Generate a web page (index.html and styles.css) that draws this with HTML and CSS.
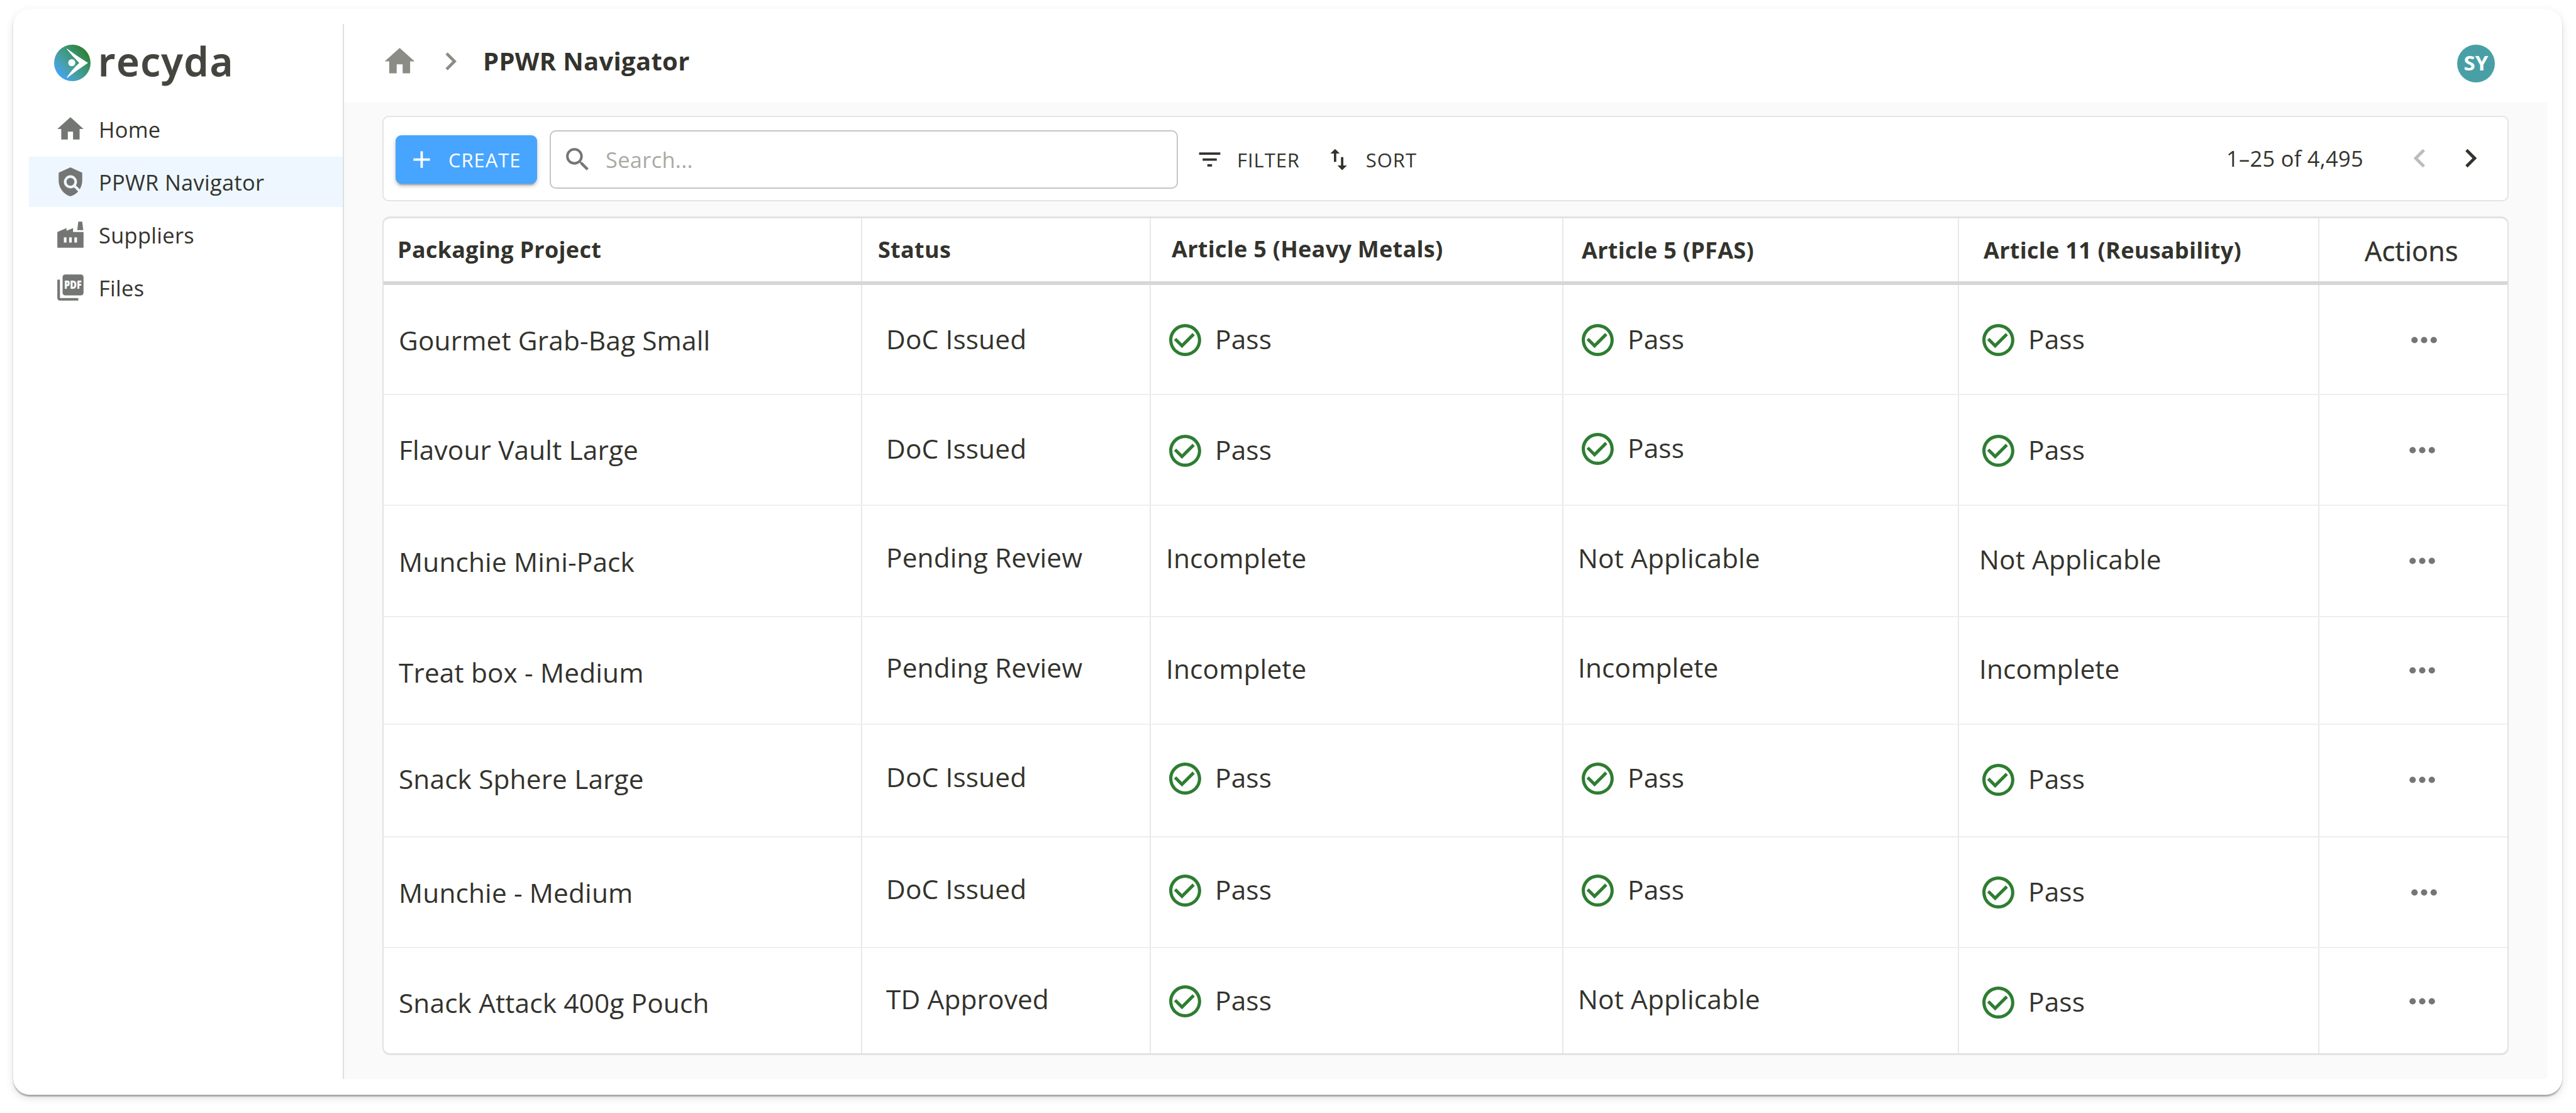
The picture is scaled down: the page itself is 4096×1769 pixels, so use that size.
FILE: index.html
```html
<!DOCTYPE html>
<html lang="en">
<head>
    <meta charset="utf-8">
    <title>PPWR Navigator - recyda</title>
    <link rel="stylesheet" href="styles.css">
</head>
<body>

    <!-- shared icons -->
    <svg class="sprite">
        <symbol id="home" viewBox="0 0 24 24"><path d="M10 20v-6h4v6h5v-8h3L12 3 2 12h3v8z"/></symbol>
        <symbol id="chevron-right" viewBox="0 0 24 24"><path d="M10 6 8.59 7.41 13.17 12l-4.58 4.59L10 18l6-6z"/></symbol>
        <symbol id="chevron-left" viewBox="0 0 24 24"><path d="M15.41 7.41 14 6l-6 6 6 6 1.41-1.41L10.83 12z"/></symbol>
        <symbol id="check" viewBox="0 0 24 24"><path d="M16.59 7.58 10 14.17l-3.59-3.58L5 12l5 5 8-8zM12 2C6.48 2 2 6.48 2 12s4.48 10 10 10 10-4.48 10-10S17.52 2 12 2zm0 18c-4.42 0-8-3.58-8-8s3.58-8 8-8 8 3.58 8 8-3.58 8-8 8z"/></symbol>
        <symbol id="more" viewBox="0 0 24 24"><circle cx="6" cy="12" r="2"/><circle cx="12" cy="12" r="2"/><circle cx="18" cy="12" r="2"/></symbol>
    </svg>

    <div class="window">

        <aside class="sidebar">
            <div class="logo">
                <svg class="logo-mark" viewBox="0 0 100 100">
                    <defs>
                        <linearGradient id="mark" x1="0.1" y1="0.85" x2="0.88" y2="0.15">
                            <stop offset="0" stop-color="#43a4fb"/>
                            <stop offset="0.35" stop-color="#48a0a8"/>
                            <stop offset="0.7" stop-color="#37936c"/>
                            <stop offset="1" stop-color="#2e7d32"/>
                        </linearGradient>
                    </defs>
                    <circle cx="50" cy="50" r="50" fill="url(#mark)"/>
                    <path d="M36 11Q64 32 93 50Q64 69 36 91Q34 91.500 35 89.500Q50 67 69 50Q50 32 35 12.500Q34.500 10.500 36 11z" fill="#fff"/>
                    <circle cx="48.500" cy="49.500" r="9.700" fill="#fff"/>
                </svg>
                <span class="logo-text">recyda</span>
            </div>

            <nav class="nav">
                <a class="nav-item">
                    <svg class="nav-icon"><use href="#home"/></svg>
                    <span>Home</span>
                </a>
                <a class="nav-item active">
                    <svg class="nav-icon" viewBox="0 0 24 24"><path d="M21 5l-9-4-9 4v6c0 5.550 3.840 10.740 9 12 2.300-.560 4.330-1.900 5.880-3.710l-3.120-3.120c-1.940 1.290-4.580 1.070-6.290-.640-1.950-1.950-1.950-5.120 0-7.070 1.950-1.950 5.120-1.950 7.070 0 1.710 1.710 1.920 4.350.640 6.290l2.900 2.900C20.290 15.690 21 13.380 21 11V5z"/><circle cx="12" cy="12" r="3"/></svg>
                    <span>PPWR Navigator</span>
                </a>
                <a class="nav-item">
                    <svg class="nav-icon" viewBox="0 0 24 24"><path d="M22 22H2V10l7-3v2l5-2v3h8v12zM17.200 8.500 18 2h3l.800 6.500h-4.600zM11 18h2v-4h-2v4zm-4 0h2v-4H7v4zm10-4h-2v4h2v-4z"/></svg>
                    <span>Suppliers</span>
                </a>
                <a class="nav-item">
                    <svg class="nav-icon" viewBox="0 0 24 24">
                        <path d="M4 6H2v14c0 1.100.900 2 2 2h14v-2H4z"/>
                        <rect x="6" y="2" width="16" height="16" rx="2"/>
                        <text class="pdf" x="7.200" y="13" textLength="13.400" lengthAdjust="spacingAndGlyphs">PDF</text>
                    </svg>
                    <span>Files</span>
                </a>
            </nav>
        </aside>

        <main class="main">
            <header class="topbar">
                <svg class="crumb-icon"><use href="#home"/></svg>
                <svg class="crumb-icon"><use href="#chevron-right"/></svg>
                <h1>PPWR Navigator</h1>
                <div class="avatar">SY</div>
            </header>

            <div class="content">
                <div class="toolbar">
                    <button class="create">
                        <svg class="btn-icon" viewBox="0 0 24 24"><path d="M19 13h-6v6h-2v-6H5v-2h6V5h2v6h6z"/></svg>
                        <span>CREATE</span>
                    </button>
                    <div class="search">
                        <svg class="search-icon" viewBox="0 0 24 24"><path d="M15.500 14h-.790l-.280-.270C15.410 12.590 16 11.110 16 9.500 16 5.910 13.090 3 9.500 3S3 5.910 3 9.500 5.910 16 9.500 16c1.610 0 3.090-.590 4.230-1.570l.270.280v.790l5 4.990L20.490 19l-4.990-5zm-6 0C7.010 14 5 11.990 5 9.500S7.010 5 9.500 5 14 7.010 14 9.500 11.990 14 9.500 14z"/></svg>
                        <span>Search...</span>
                    </div>
                    <button class="tool filter">
                        <svg class="btn-icon" viewBox="0 0 24 24"><path d="M10 18h4v-2h-4v2zM3 6v2h18V6H3zm3 7h12v-2H6v2z"/></svg>
                        <span>FILTER</span>
                    </button>
                    <button class="tool sort">
                        <svg class="btn-icon" viewBox="0 0 24 24"><path d="M16 17.010V10h-2v7.010h-3L15 21l4-3.990h-3zM9 3 5 6.990h3V14h2V6.990h3L9 3z"/></svg>
                        <span>SORT</span>
                    </button>
                    <div class="pager">
                        <span>1–25 of 4,495</span>
                        <svg class="page-icon disabled"><use href="#chevron-left"/></svg>
                        <svg class="page-icon"><use href="#chevron-right"/></svg>
                    </div>
                </div>

                <div class="table">
                    <div class="row head">
                        <div class="cell name up-1">Packaging Project</div>
                        <div class="cell status up-1">Status</div>
                        <div class="cell metals up-2">Article 5 (Heavy Metals)</div>
                        <div class="cell pfas">Article 5 (PFAS)</div>
                        <div class="cell reuse">Article 11 (Reusability)</div>
                        <div class="cell actions down-1">Actions</div>
                    </div>
                    <div class="row">
                        <div class="cell name down-1">Gourmet Grab-Bag Small</div>
                        <div class="cell status up-1">DoC Issued</div>
                        <div class="cell metals pass down-1"><svg><use href="#check"/></svg><span>Pass</span></div>
                        <div class="cell pfas pass down-1"><svg><use href="#check"/></svg><span>Pass</span></div>
                        <div class="cell reuse pass down-1"><svg><use href="#check"/></svg><span>Pass</span></div>
                        <div class="cell actions shifted down-1"><svg><use href="#more"/></svg></div>
                    </div>
                    <div class="row">
                        <div class="cell name up-1">Flavour Vault Large</div>
                        <div class="cell status up-3">DoC Issued</div>
                        <div class="cell metals pass down-1"><svg><use href="#check"/></svg><span>Pass</span></div>
                        <div class="cell pfas pass up-2"><svg><use href="#check"/></svg><span>Pass</span></div>
                        <div class="cell reuse pass down-1"><svg><use href="#check"/></svg><span>Pass</span></div>
                        <div class="cell actions"><svg><use href="#more"/></svg></div>
                    </div>
                    <div class="row">
                        <div class="cell name down-1">Munchie Mini-Pack</div>
                        <div class="cell status up-6">Pending Review</div>
                        <div class="cell metals up-5">Incomplete</div>
                        <div class="cell pfas up-5">Not Applicable</div>
                        <div class="cell reuse up-3">Not Applicable</div>
                        <div class="cell actions"><svg><use href="#more"/></svg></div>
                    </div>
                    <div class="row">
                        <div class="cell name down-3">Treat box - Medium</div>
                        <div class="cell status up-5">Pending Review</div>
                        <div class="cell metals up-3">Incomplete</div>
                        <div class="cell pfas up-5">Incomplete</div>
                        <div class="cell reuse up-3">Incomplete</div>
                        <div class="cell actions"><svg><use href="#more"/></svg></div>
                    </div>
                    <div class="row">
                        <div class="cell name up-3">Snack Sphere Large</div>
                        <div class="cell status up-6">DoC Issued</div>
                        <div class="cell metals pass up-3"><svg><use href="#check"/></svg><span>Pass</span></div>
                        <div class="cell pfas pass up-3"><svg><use href="#check"/></svg><span>Pass</span></div>
                        <div class="cell reuse pass up-1"><svg><use href="#check"/></svg><span>Pass</span></div>
                        <div class="cell actions up-1"><svg><use href="#more"/></svg></div>
                    </div>
                    <div class="row">
                        <div class="cell name">Munchie - Medium</div>
                        <div class="cell status up-6">DoC Issued</div>
                        <div class="cell metals pass up-3"><svg><use href="#check"/></svg><span>Pass</span></div>
                        <div class="cell pfas pass up-3"><svg><use href="#check"/></svg><span>Pass</span></div>
                        <div class="cell reuse pass"><svg><use href="#check"/></svg><span>Pass</span></div>
                        <div class="cell actions shifted"><svg><use href="#more"/></svg></div>
                    </div>
                    <div class="row">
                        <div class="cell name down-3">Snack Attack 400g Pouch</div>
                        <div class="cell status up-3">TD Approved</div>
                        <div class="cell metals pass down-1"><svg><use href="#check"/></svg><span>Pass</span></div>
                        <div class="cell pfas up-3">Not Applicable</div>
                        <div class="cell reuse pass down-3"><svg><use href="#check"/></svg><span>Pass</span></div>
                        <div class="cell actions down-1"><svg><use href="#more"/></svg></div>
                    </div>
                </div>
            </div>
        </main>
    </div>

</body>
</html>
```
FILE: styles.css
```css
* {
    box-sizing: border-box;
}

body {
    margin: 0;
    height: 1769px;
    padding: 14px 22px 29px 21px;
    background-color: #fff;
    color: #33332d;
    font-family: "Open Sans", "Noto Sans", sans-serif;
    overflow: hidden;
}

svg {
    display: block;
    flex-shrink: 0;
    fill: currentColor;
}

.sprite {
    display: none;
}

.window {
    display: flex;
    height: 1726px;
    padding: 24px 24px 25px 25px;
    border-radius: 26px;
    background-color: #fff;
    box-shadow: 0 4px 2px -1px rgba(0, 0, 0, 0.2),
                0 2px 3px rgba(0, 0, 0, 0.14),
                0 5px 14px rgba(0, 0, 0, 0.12);
}

/* sidebar */

.sidebar {
    width: 501px;
    border-right: 2px solid #e0e0e0;
}

.logo {
    display: flex;
    align-items: center;
    height: 127px;
    padding: 0 0 3px 40px;
}

.logo-mark {
    width: 58px;
    height: 58px;
}

.logo-text {
    margin: -8px 0 0 12px;
    color: #454540;
    font-size: 63px;
    font-weight: 600;
    letter-spacing: 2px;
    line-height: 1;
    -webkit-text-stroke: 1px #454540;
}

.nav {
    display: flex;
    flex-direction: column;
    gap: 4px;
}

.nav-item {
    display: flex;
    align-items: center;
    gap: 20px;
    height: 80px;
    padding-left: 41px;
    font-size: 34.4px;
    letter-spacing: 0.0094em;
}

.nav-item.active {
    background-color: #eef7ff;
}

.nav-icon {
    width: 50px;
    height: 50px;
    color: #747674;
}

.pdf {
    fill: #fff;
    font-size: 8px;
    font-weight: 800;
    letter-spacing: 0;
}

/* top bar */

.main {
    flex: 1;
    background-color: #fafafa;
}

.topbar {
    display: flex;
    align-items: center;
    height: 125px;
    padding: 0 83px 6px 60px;
    background-color: #fff;
}

.crumb-icon {
    width: 57px;
    height: 57px;
    margin-right: 24px;
    color: #8a8c85;
}

.topbar h1 {
    margin: -2px 0 0 -1px;
    font-size: 40px;
    font-weight: 700;
    letter-spacing: 0.0075em;
}

.avatar {
    display: flex;
    align-items: center;
    justify-content: center;
    width: 60px;
    height: 60px;
    margin: 7px 0 0 auto;
    padding-bottom: 3px;
    border-radius: 50%;
    background-color: #48a0a6;
    color: #fff;
    font-size: 33px;
    font-weight: 700;
}

.content {
    padding: 21px 61px 0;
}

/* toolbar */

.toolbar {
    display: flex;
    align-items: center;
    height: 136px;
    padding: 2px 29px 0 19px;
    border: 2px solid #e4e4e4;
    border-radius: 10px;
    background-color: #fff;
}

button {
    display: flex;
    align-items: center;
    padding: 0;
    border: none;
    background: none;
    color: #33332d;
    font-family: inherit;
    font-size: 31px;
    letter-spacing: 0.03em;
}

button span {
    padding-top: 2px;
}

.btn-icon {
    width: 45px;
    height: 45px;
    margin-right: 20px;
}

.create {
    width: 225px;
    height: 77px;
    padding-left: 19px;
    border-radius: 9px;
    background-color: #47a5ff;
    color: #fff;
    box-shadow: 0 6px 2px -4px rgba(0, 0, 0, 0.2),
                0 4px 4px rgba(0, 0, 0, 0.14),
                0 2px 10px rgba(0, 0, 0, 0.12);
}

.search {
    display: flex;
    align-items: center;
    width: 999px;
    height: 93px;
    margin-left: 20px;
    padding-left: 18px;
    border: 2px solid #c4c4c4;
    border-radius: 10px;
    color: #aaa9a4;
    font-size: 34.4px;
    letter-spacing: 0.0094em;
}

.search-icon {
    width: 49px;
    height: 49px;
    margin-right: 20px;
    color: #747674;
}

.filter {
    margin-left: 28px;
}

.sort {
    margin-left: 39px;
}

.tool .btn-icon {
    margin-right: 21px;
}

.pager {
    display: flex;
    align-items: center;
    margin-left: auto;
    padding-bottom: 4px;
    font-size: 34.4px;
    letter-spacing: 0.0094em;
}

.pager span {
    margin-right: 60px;
}

.page-icon {
    width: 59px;
    height: 59px;
}

.page-icon.disabled {
    margin-right: 22px;
    color: #bcbcba;
}

/* table */

.table {
    display: grid;
    grid-template-rows: 106px 175px 176px 177px 171px 179px 176px 167px;
    margin-top: 24px;
    border: 3px solid #e2e2e2;
    border-width: 3px 2px;
    border-radius: 12px;
    background-color: #fff;
    overflow: hidden;
}

.row {
    display: grid;
    grid-template-columns: 761px 459px 656px 629px 573px 299px;
    border-bottom: 2px solid #eee;
    font-size: 42.4px;
    letter-spacing: 0.003em;
}

.row:last-child {
    border-bottom: none;
}

.cell {
    display: flex;
    align-items: center;
    border-right: 2px solid #e8e8e8;
    white-space: nowrap;
}

.cell:last-child {
    border-right: none;
}

.name { padding-left: 24px; }
.status { padding-left: 38px; }
.metals { padding-left: 24px; }
.pfas { padding-left: 23px; }
.reuse { padding-left: 32px; }
.actions { padding-left: 133px; }
.actions.shifted { padding-left: 136px; }

.head {
    border-bottom: 6px solid #d7d7d7;
    font-size: 36px;
    font-weight: 700;
    letter-spacing: 0.008em;
}

.head .name { padding-left: 22px; }
.head .status { padding-left: 25px; }
.head .metals { padding-left: 33px; }
.head .pfas { padding-left: 29px; }
.head .reuse { padding-left: 39px; }

.head .actions {
    padding-left: 72px;
    font-size: 43px;
    font-weight: 500;
    -webkit-text-stroke: 0.5px #33332d;
}

.cell svg {
    width: 61px;
    height: 61px;
    color: #747674;
}

.pass svg {
    margin: 0 17px 0 0;
    color: #2e7d32;
}

.pfas.pass svg {
    margin-left: 1px;
}

.pass span {
    margin-top: -4px;
}

/* small vertical nudges inside a row */

.up-1 { padding-bottom: 2px; }
.up-2 { padding-bottom: 4px; }
.up-3 { padding-bottom: 6px; }
.up-5 { padding-bottom: 10px; }
.up-6 { padding-bottom: 12px; }
.down-1 { padding-top: 2px; }
.down-3 { padding-top: 6px; }
```
